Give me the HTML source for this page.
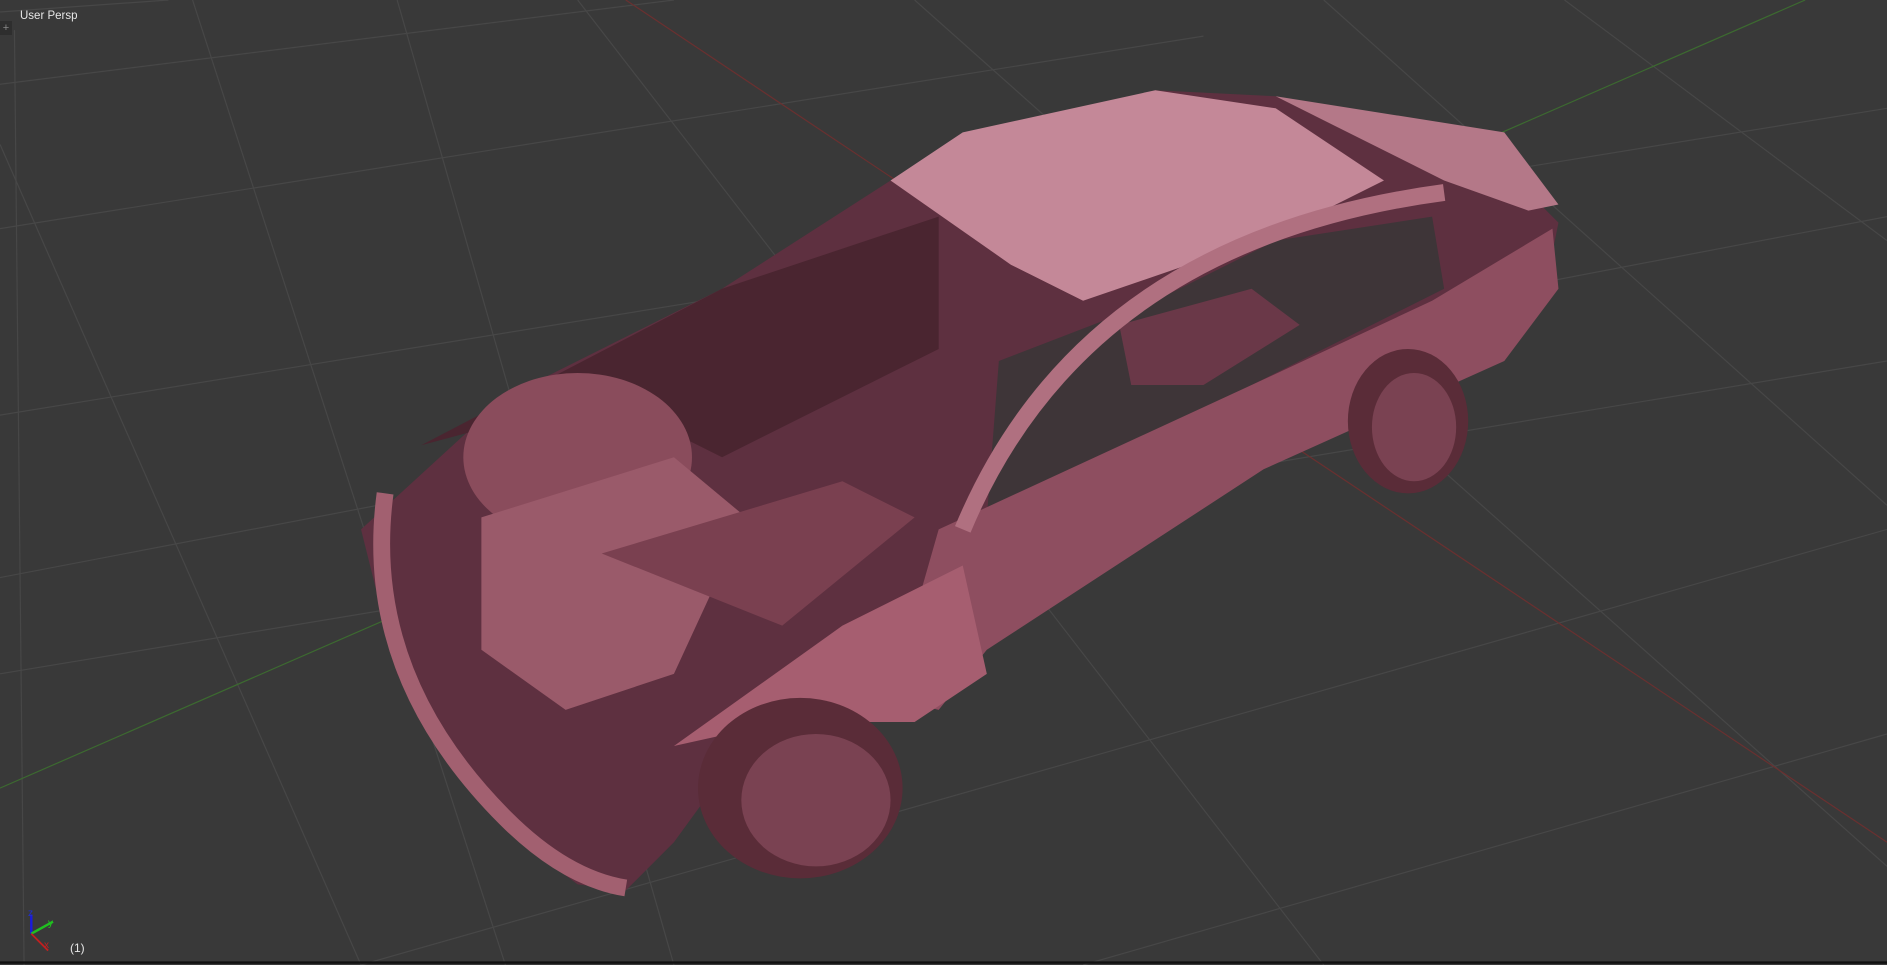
<!DOCTYPE html>
<html><head><meta charset="utf-8"><style>
html,body{margin:0;padding:0;background:#393939;overflow:hidden}
#v{position:absolute;left:0;top:0;width:1887px;height:965px}
.t{position:absolute;font-family:"Liberation Sans",sans-serif;color:#e6e6e6;font-size:13px}
</style></head><body>
<svg id="v" viewBox="0 0 1568 802" preserveAspectRatio="none" xmlns="http://www.w3.org/2000/svg">
<rect width="1568" height="802" fill="#393939"/>
<g stroke="#474747" stroke-width="1" fill="none">
<line x1="0" y1="70" x2="560" y2="0"/><line x1="0" y1="190" x2="1000" y2="30"/>
<line x1="0" y1="345" x2="1568" y2="90"/><line x1="0" y1="480" x2="1568" y2="180"/>
<line x1="0" y1="560" x2="1568" y2="300"/><line x1="300" y1="802" x2="1568" y2="440"/>
<line x1="900" y1="802" x2="1568" y2="610"/>
<line x1="140" y1="0" x2="0" y2="10"/><line x1="160" y1="0" x2="420" y2="802"/>
<line x1="12" y1="25" x2="20" y2="802"/><line x1="330" y1="0" x2="560" y2="802"/>
<line x1="480" y1="0" x2="1100" y2="802"/><line x1="760" y1="0" x2="1568" y2="720"/>
<line x1="1100" y1="0" x2="1568" y2="420"/><line x1="1300" y1="0" x2="1568" y2="200"/>
<line x1="0" y1="120" x2="300" y2="802"/>
</g>
<line x1="520" y1="0" x2="1568" y2="700" stroke="#6a3030" stroke-width="1"/>
<line x1="0" y1="655" x2="1500" y2="0" stroke="#3c6a30" stroke-width="1"/>
<polygon fill="#5e3040" points="300,440 420,330 600,240 740,150 960,75 1060,80 1250,140 1295,185 1280,260 1200,300 1040,380 800,500 640,590 560,700 520,740 480,735 420,690 330,560"/>
<polygon fill="#4a2530" points="350,370 600,240 780,180 780,290 600,380 500,330"/>
<!-- cabin gap -->
<polygon fill="#3e3538" points="830,300 960,250 1060,200 1190,180 1200,240 1040,320 820,430"/>
<polygon fill="#6a3848" points="930,270 1040,240 1080,270 1000,320 940,320"/>
<ellipse cx="480" cy="380" rx="95" ry="70" fill="#8a4c5c"/>
<polygon fill="#9a5a6a" points="400,430 560,380 620,430 560,560 470,590 400,540"/>
<polygon fill="#7a4050" points="500,460 700,400 760,430 650,520"/>
<polygon fill="#8e4e60" points="780,440 1040,320 1190,250 1290,190 1295,240 1250,300 1050,390 820,540 780,590 740,580"/>
<polygon fill="#a65e70" points="560,620 700,520 800,470 820,560 760,600 650,600"/>
<polygon fill="#c48898" points="740,150 800,110 960,75 1060,90 1150,150 1060,195 900,250 840,220"/>
<polygon fill="#b47888" points="1060,80 1250,110 1295,170 1270,175 1200,150"/>
<path d="M800,440 Q900,200 1200,160" stroke="#b07080" stroke-width="14" fill="none"/>
<path d="M320,410 Q300,560 420,680 Q470,730 520,738" stroke="#a26070" stroke-width="14" fill="none"/>
<ellipse cx="665" cy="655" rx="85" ry="75" fill="#5a2c38"/>
<ellipse cx="678" cy="665" rx="62" ry="55" fill="#7a4252"/>
<ellipse cx="1170" cy="350" rx="50" ry="60" fill="#5a2c38"/>
<ellipse cx="1175" cy="355" rx="35" ry="45" fill="#7a4252"/>
<line x1="26" y1="776" x2="26" y2="760" stroke="#1a1adc" stroke-width="2"/>
<line x1="26" y1="776" x2="44" y2="766" stroke="#20c020" stroke-width="2"/>
<line x1="26" y1="776" x2="40" y2="790" stroke="#c02020" stroke-width="1.5"/>
<line x1="0" y1="800" x2="1568" y2="800" stroke="#111" stroke-width="2"/>
</svg>
<div class="t" style="left:20px;top:10px;font-size:11.5px">User Persp</div>
<div class="t" style="left:0;top:21px;width:12px;height:14px;background:#2e2e2e;color:#888;font-size:11px;text-align:center;line-height:14px">+</div>
<div class="t" style="left:70px;top:941px;font-size:12px">(1)</div>
<div class="t" style="left:28px;top:908px;font-size:10px;color:#2030d0">z</div>
<div class="t" style="left:48px;top:918px;font-size:10px;color:#20c020">y</div>
<div class="t" style="left:44px;top:940px;font-size:10px;color:#c02020">x</div>
</body></html>
